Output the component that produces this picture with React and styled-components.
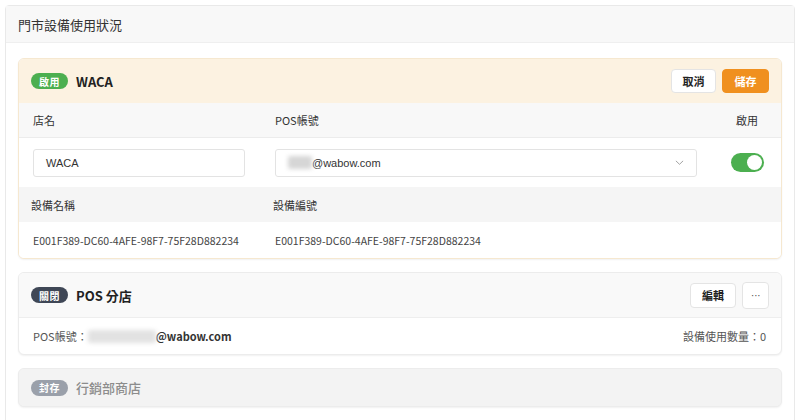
import React, { useState } from "react";
import styled, { createGlobalStyle } from "styled-components";

const GlobalStyle = createGlobalStyle`
  html, body {
    margin: 0;
    padding: 0;
    background: #ffffff;
    font-family: "Noto Sans CJK TC", "Noto Sans", sans-serif;
    color: #333;
  }
`;

// 外框面板
const Panel = styled.div`
  margin: 5px 5px 0 5px;
  border: 1px solid #e9e9e9;
  border-radius: 4px;
  background: #fff;
`;

const PanelHeader = styled.div`
  height: 36px;
  display: flex;
  align-items: center;
  padding-left: 12px;
  font-size: 13px;
  color: #333;
  background: #f8f8f8;
  border-bottom: 1px solid #efefef;
`;

const PanelBody = styled.div`
  display: flex;
  flex-direction: column;
  gap: 13px;
  padding: 15px 12px 0 12px;
`;

// 各分店卡片
const Card = styled.div`
  border: 1px solid ${(p) => (p.$active ? "#f6e8d0" : "#ececec")};
  border-radius: 6px;
  background: ${(p) => (p.$archived ? "#f3f3f3" : "#fff")};
  box-shadow: 0 1px 2px rgba(0, 0, 0, 0.06);
  overflow: hidden;
`;

const CardHeader = styled.div`
  height: ${(p) => p.$h || 44}px;
  display: flex;
  align-items: center;
  padding: 0 12px;
  background: ${(p) => p.$bg};
  border-bottom: ${(p) => (p.$line ? "1px solid #eeeeee" : "none")};
  box-sizing: border-box;
`;

const Badge = styled.span`
  display: inline-flex;
  align-items: center;
  justify-content: center;
  width: 37px;
  height: 16px;
  border-radius: 8px;
  background: ${(p) => p.$color};
  color: #fff;
  font-size: 10px;
  font-weight: 700;
  letter-spacing: 0.5px;
`;

const CardTitle = styled.span`
  margin-left: 8px;
  font-size: 13px;
  font-weight: ${(p) => (p.$muted ? 500 : 700)};
  color: ${(p) => (p.$muted ? "#8c8c8c" : "#222")};
`;

const Actions = styled.div`
  margin-left: auto;
  display: flex;
  align-items: center;
  gap: 6px;
`;

const Button = styled.button`
  height: ${(p) => p.$h || 24}px;
  min-width: ${(p) => p.$w}px;
  padding: 0;
  border-radius: 4px;
  border: 1px solid ${(p) => (p.$primary ? "#f0901f" : "#e4e4e4")};
  background: ${(p) => (p.$primary ? "#f0901f" : "#fff")};
  color: ${(p) => (p.$primary ? "#fff" : "#222")};
  font-family: inherit;
  font-size: 11px;
  font-weight: 700;
  display: inline-flex;
  align-items: center;
  justify-content: center;
`;

const MoreButton = styled(Button)`
  font-family: "Liberation Sans", Arial, sans-serif;
  font-weight: 400;
  color: #555;
  letter-spacing: -0.5px;
`;

// 表格列
const GridRow = styled.div`
  display: grid;
  grid-template-columns: ${(p) => p.$cols};
  column-gap: ${(p) => p.$gap || 0}px;
  align-items: center;
  height: ${(p) => p.$h}px;
  padding: 0 ${(p) => p.$pad || 14}px;
  background: ${(p) => p.$bg || "#fff"};
  border-bottom: ${(p) => (p.$line ? "1px solid #ececec" : "none")};
  box-sizing: border-box;
  font-size: ${(p) => p.$size || 11}px;
  color: ${(p) => p.$color || "#333"};
`;

const Center = styled.div`
  display: flex;
  justify-content: center;
`;

const Field = styled.div`
  height: 28px;
  display: flex;
  align-items: center;
  padding: 0 12px;
  border: 1px solid #e3e3e3;
  border-radius: 3px;
  background: #fff;
  font-family: "Liberation Sans", Arial, sans-serif;
  font-size: 11px;
  color: #333;
  box-sizing: border-box;
`;

const Blur = styled.span`
  display: inline-block;
  width: ${(p) => p.$w}px;
  height: 13px;
  background: ${(p) => p.$tone || "#d6d6d6"};
  filter: blur(2px);
  border-radius: 2px;
`;

const Chevron = styled.svg`
  margin-left: auto;
  width: 9px;
  height: 9px;
`;

const Switch = styled.button`
  position: relative;
  width: 33px;
  height: 19px;
  padding: 0;
  border: none;
  border-radius: 10px;
  background: ${(p) => (p.$on ? "#4caf50" : "#ccc")};
  cursor: pointer;

  &::after {
    content: "";
    position: absolute;
    top: 2px;
    left: ${(p) => (p.$on ? "16px" : "2px")};
    width: 15px;
    height: 15px;
    border-radius: 50%;
    background: #fff;
  }
`;

const InfoRow = styled.div`
  height: 36px;
  display: flex;
  align-items: center;
  padding: 0 15px 0 14px;
  font-size: 11px;
  color: #555;
`;

const Email = styled.span`
  font-size: 11px;
  font-weight: 700;
  color: #333;
`;

const Count = styled.span`
  margin-left: auto;
  color: #555;
`;

export default function App() {
  const [enabled, setEnabled] = useState(true);

  return (
    <>
      <GlobalStyle />
      <Panel>
        <PanelHeader>門市設備使用狀況</PanelHeader>
        <PanelBody>
          <Card $active>
            <CardHeader $bg="#fcf2e1">
              <Badge $color="#4caf50">啟用</Badge>
              <CardTitle>WACA</CardTitle>
              <Actions>
                <Button $w={45}>取消</Button>
                <Button $w={47} $primary>儲存</Button>
              </Actions>
            </CardHeader>
            <GridRow $cols="212px 422px 1fr" $gap={30} $h={35} $bg="#f8f8f8" $line>
              <div>店名</div>
              <div>POS帳號</div>
              <Center>啟用</Center>
            </GridRow>
            <GridRow $cols="212px 422px 1fr" $gap={30} $h={49}>
              <Field>WACA</Field>
              <Field>
                <Blur $w={24} />
                <span>@wabow.com</span>
                <Chevron viewBox="0 0 10 10">
                  <path d="M1 3.2 L5 7 L9 3.2" fill="none" stroke="#999" strokeWidth="1" />
                </Chevron>
              </Field>
              <Center>
                <Switch $on={enabled} onClick={() => setEnabled(!enabled)} />
              </Center>
            </GridRow>
            <GridRow $cols="242px 1fr" $h={35} $pad={12} $bg="#f5f5f5">
              <div>設備名稱</div>
              <div>設備編號</div>
            </GridRow>
            <GridRow $cols="242px 1fr" $h={36} $size={10.5} $color="#444">
              <div>E001F389-DC60-4AFE-98F7-75F28D882234</div>
              <div>E001F389-DC60-4AFE-98F7-75F28D882234</div>
            </GridRow>
          </Card>

          <Card>
            <CardHeader $bg="#f9f9f9" $h={45} $line>
              <Badge $color="#3f4756">關閉</Badge>
              <CardTitle>POS 分店</CardTitle>
              <Actions>
                <Button $w={46} $h={25}>編輯</Button>
                <MoreButton $w={27} $h={27}>···</MoreButton>
              </Actions>
            </CardHeader>
            <InfoRow>
              <span>POS帳號：</span>
              <Blur $w={68} $tone="#e2e2e2" />
              <Email>@wabow.com</Email>
              <Count>設備使用數量：0</Count>
            </InfoRow>
          </Card>

          <Card $archived>
            <CardHeader $bg="#f3f3f3" $h={37}>
              <Badge $color="#9aa0aa">封存</Badge>
              <CardTitle $muted>行銷部商店</CardTitle>
            </CardHeader>
          </Card>

          <Card $archived>
            <CardHeader $bg="#f3f3f3" $h={37} />
          </Card>
        </PanelBody>
      </Panel>
    </>
  );
}
